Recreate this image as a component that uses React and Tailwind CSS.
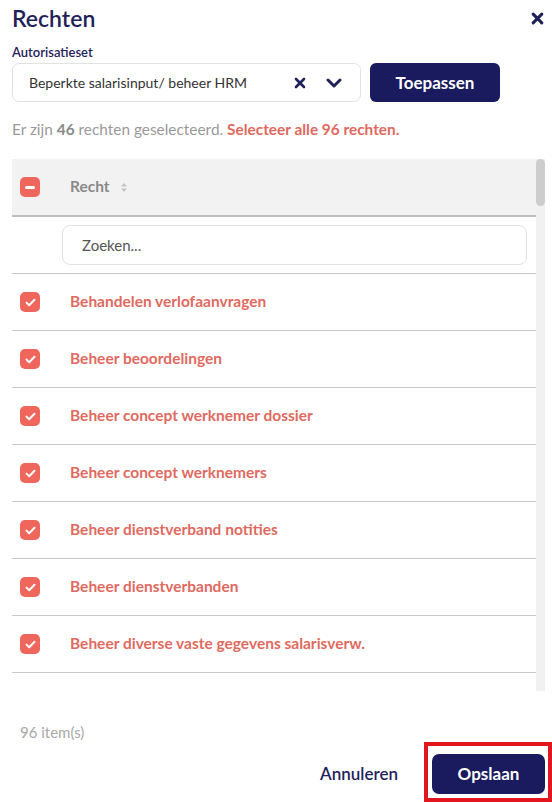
import React from "react";

const rows = [
  "Behandelen verlofaanvragen",
  "Beheer beoordelingen",
  "Beheer concept werknemer dossier",
  "Beheer concept werknemers",
  "Beheer dienstverband notities",
  "Beheer dienstverbanden",
  "Beheer diverse vaste gegevens salarisverw.",
];

function Check() {
  return (
    <div className="w-5 h-5 shrink-0 rounded-[5px] bg-[#ef675c] flex items-center justify-center">
      <svg width="11" height="9" viewBox="0 0 11 9" fill="none">
        <path d="M1.5 4.6 L4.2 7.2 L9.5 1.8" stroke="white" strokeWidth="2" strokeLinecap="round" strokeLinejoin="round" />
      </svg>
    </div>
  );
}

function XIcon({ size = 12, stroke = 2.6 }) {
  return (
    <svg width={size} height={size} viewBox="0 0 12 12" fill="none">
      <path d="M2 2 L10 10 M10 2 L2 10" stroke="#1f225a" strokeWidth={stroke} strokeLinecap="round" />
    </svg>
  );
}

export default function App() {
  return (
    <div className="w-[552px] h-[802px] bg-white relative overflow-hidden text-[#1f225a]" style={{ fontFamily: "Lato, 'Noto Sans', sans-serif" }}>
      <div className="flex items-center justify-between pl-3 pr-[8px] pt-[2px] h-[34px]">
        <h1 className="text-[23px] font-semibold leading-none">Rechten</h1>
        <XIcon size={13} stroke={2.8} />
      </div>
      <div className="pl-3 mt-[12px] text-[13px] font-semibold leading-none">Autorisatieset</div>
      <div className="flex pl-3 mt-[4px] gap-[9px]">
        <div className="w-[349px] h-[39px] border border-[#e2e2e2] rounded-[7px] flex items-center pl-4 pr-[18px]">
          <span className="flex-1 text-[14px] text-[#333]">Beperkte salarisinput/ beheer HRM</span>
          <XIcon size={12} stroke={2.6} />
          <svg className="ml-5" width="16" height="10" viewBox="0 0 16 10" fill="none">
            <path d="M2 2 L8 8 L14 2" stroke="#1f225a" strokeWidth="3" strokeLinecap="round" strokeLinejoin="round" />
          </svg>
        </div>
        <button className="w-[130px] h-[39px] rounded-[6px] bg-[#1a1b5e] text-white text-[17px] font-bold">Toepassen</button>
      </div>
      <div className="pl-3 mt-[19px] h-[18px] flex items-center text-[15.4px] text-[#9a9a9a] leading-none whitespace-pre">
        <span>Er zijn </span>
        <span className="font-bold text-[#8a8a8a]">46</span>
        <span> rechten geselecteerd. </span>
        <span className="font-bold text-[#e06a60]">Selecteer alle 96 rechten.</span>
      </div>
      <div className="flex ml-3 mt-[20px] h-[532px]">
        <div className="w-[524px] overflow-hidden">
          <div className="h-[58px] bg-[#f2f2f2] border-b-2 border-[#bdbdbd] flex items-center">
            <div className="w-5 h-5 ml-2 rounded-[5px] bg-[#ef675c] flex items-center justify-center">
              <div className="w-[10px] h-[3px] bg-white rounded-full" />
            </div>
            <span className="ml-[30px] text-[15.5px] font-bold text-[#8a8a8a]">Recht</span>
            <svg className="ml-[10px]" width="8" height="11" viewBox="0 0 8 11">
              <path d="M4 1 L7 4.5 H1 Z" fill="#c4c4c4" />
              <path d="M4 10 L7 6.5 H1 Z" fill="#c4c4c4" />
            </svg>
          </div>
          <div className="h-[57px] border-b border-[#c8c8c8] flex items-center pl-[50px] pr-[9px]">
            <div className="flex-1 h-[40px] border border-[#e2e2e2] rounded-[8px] flex items-center pl-[19px] text-[15px] text-[#555]">Zoeken...</div>
          </div>
          {rows.map((r) => (
            <div key={r} className="h-[57px] border-b border-[#c8c8c8] flex items-center pl-2">
              <Check />
              <span className="ml-[30px] text-[15.5px] font-bold text-[#e06a60] whitespace-nowrap">{r}</span>
            </div>
          ))}
        </div>
        <div className="w-[9px] bg-[#f1f1f1] relative">
          <div className="absolute top-0 left-0 w-[9px] h-[47px] rounded-full bg-[#cdcdcd]" />
        </div>
      </div>
      <div className="pl-5 mt-[33px] h-[16px] flex items-center text-[15px] text-[#a8a8a8] leading-none">96 item(s)</div>
      <div className="absolute left-[424px] top-[742px] w-[128px] h-[60px] border-4 border-[#e3151f]" />
      <div className="flex justify-end items-center pr-[7px] mt-[14px] gap-[34px]">
        <span className="text-[17px] font-semibold text-[#1f225a]">Annuleren</span>
        <button className="w-[113px] h-[40px] rounded-[7px] bg-[#1a1b5e] text-white text-[17px] font-bold">Opslaan</button>
      </div>
    </div>
  );
}
